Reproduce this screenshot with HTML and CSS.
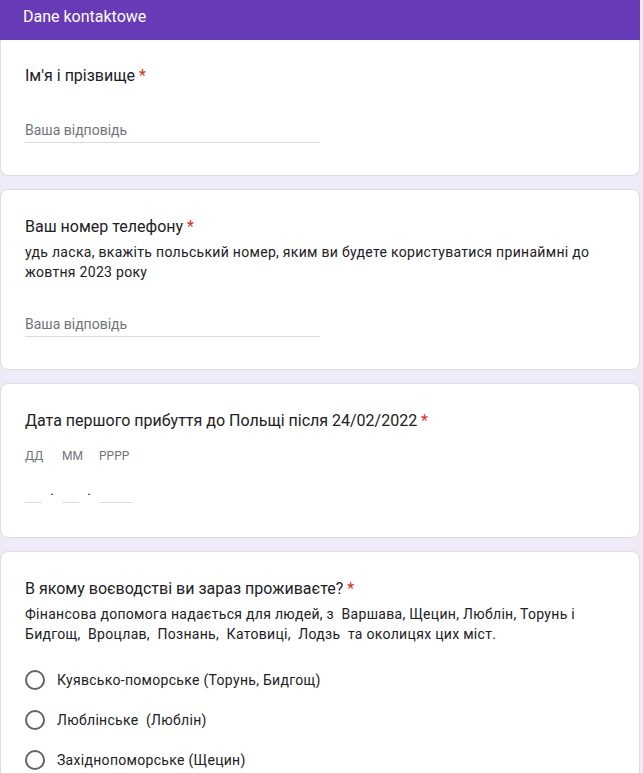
FILE: index.html
```html
<!DOCTYPE html>
<html lang="uk">
<head>
<meta charset="utf-8">
<title>Dane kontaktowe</title>
<link rel="stylesheet" href="styles.css">
</head>
<body>
<div class="page">
  <div class="card card-first">
    <div class="section-header">Dane kontaktowe</div>
    <div class="card-body card-body-first">
      <div class="q-title">Ім'я і прізвище <span class="req">*</span></div>
      <div class="text-input"><span class="placeholder">Ваша відповідь</span></div>
    </div>
  </div>

  <div class="card">
    <div class="card-body">
      <div class="q-title">Ваш номер телефону <span class="req">*</span></div>
      <div class="q-desc">удь ласка, вкажіть польський номер, яким ви будете користуватися принаймні до жовтня 2023 року</div>
      <div class="text-input"><span class="placeholder">Ваша відповідь</span></div>
    </div>
  </div>

  <div class="card">
    <div class="card-body card-body-date">
      <div class="q-title">Дата першого прибуття до Польщі після 24/02/2022 <span class="req">*</span></div>
      <div class="date-grid">
        <span class="date-label col-1">ДД</span>
        <span class="date-label col-3">ММ</span>
        <span class="date-label col-5">РРРР</span>
        <span class="date-field"></span>
        <span class="date-sep">.</span>
        <span class="date-field"></span>
        <span class="date-sep">.</span>
        <span class="date-field"></span>
      </div>
    </div>
  </div>

  <div class="card">
    <div class="card-body">
      <div class="q-title">В якому воєводстві ви зараз проживаєте? <span class="req">*</span></div>
      <div class="q-desc">Фінансова допомога надається для людей, з  Варшава, Щецин, Люблін, Торунь і Бидгощ,  Вроцлав,  Познань,  Катовиці,  Лодзь  та околицях цих міст.</div>
      <div class="options">
        <div class="option"><span class="radio"></span><span class="option-label">Куявсько-поморське (Торунь, Бидгощ)</span></div>
        <div class="option"><span class="radio"></span><span class="option-label">Люблінське  (Люблін)</span></div>
        <div class="option"><span class="radio"></span><span class="option-label">Західнопоморське (Щецин)</span></div>
      </div>
    </div>
  </div>
</div>
</body>
</html>
```
FILE: styles.css
```css
* {
  box-sizing: border-box;
}

html, body {
  margin: 0;
  padding: 0;
}

body {
  background: #efeaf7;
  font-family: Roboto, "Liberation Sans", Arial, sans-serif;
  color: #202124;
  height: 773px;
  overflow: hidden;
}

.page {
  width: 640px;
  display: flex;
  flex-direction: column;
  gap: 13px;
}

.card {
  background: #ffffff;
  border: 1px solid #dadce0;
  border-radius: 8px;
}

.card-first {
  border-top: none;
  border-radius: 0 0 8px 8px;
}

.section-header {
  background: #673ab7;
  color: #ffffff;
  font-size: 16px;
  line-height: 24px;
  height: 40px;
  padding: 5px 24px 0 23px;
  margin: 0 -1px;
}

.card-body {
  padding: 25px 24px 32px 24px;
}

.card-body-first {
  padding-top: 24px;
}

.card-body-date {
  padding-bottom: 34px;
}

.q-title {
  font-size: 16px;
  line-height: 24px;
}

.req {
  color: #d93025;
}

.q-desc {
  margin-top: 3px;
  font-size: 14px;
  line-height: 20px;
  letter-spacing: 0.3px;
  white-space: pre-wrap;
}

.text-input {
  margin-top: 32px;
  width: 295px;
  font-size: 14px;
  line-height: 20px;
  padding-bottom: 2px;
  border-bottom: 1px solid #dadce0;
}

.placeholder {
  color: #70757a;
}

.date-grid {
  margin-top: 15px;
  display: grid;
  grid-template-columns: 17px 20px 17px 20px 34px;
  grid-template-rows: 16px 23px;
  row-gap: 16px;
}

.date-label {
  font-size: 12px;
  line-height: 16px;
  color: #70757a;
  white-space: nowrap;
  grid-row: 1;
}

.col-1 { grid-column: 1; }
.col-3 { grid-column: 3; }
.col-5 { grid-column: 5; }

.date-field {
  grid-row: 2;
  border-bottom: 1px solid #dadce0;
}

.date-sep {
  grid-row: 2;
  font-size: 14px;
  line-height: 20px;
  text-align: center;
  color: #202124;
}

.options {
  margin-top: 16px;
  display: flex;
  flex-direction: column;
}

.option {
  height: 40px;
  display: flex;
  align-items: center;
}

.radio {
  width: 20px;
  height: 20px;
  border: 2px solid #5f6368;
  border-radius: 50%;
  flex: none;
}

.option-label {
  margin-left: 12px;
  font-size: 14px;
  line-height: 20px;
  letter-spacing: 0.3px;
  white-space: pre;
}
```
